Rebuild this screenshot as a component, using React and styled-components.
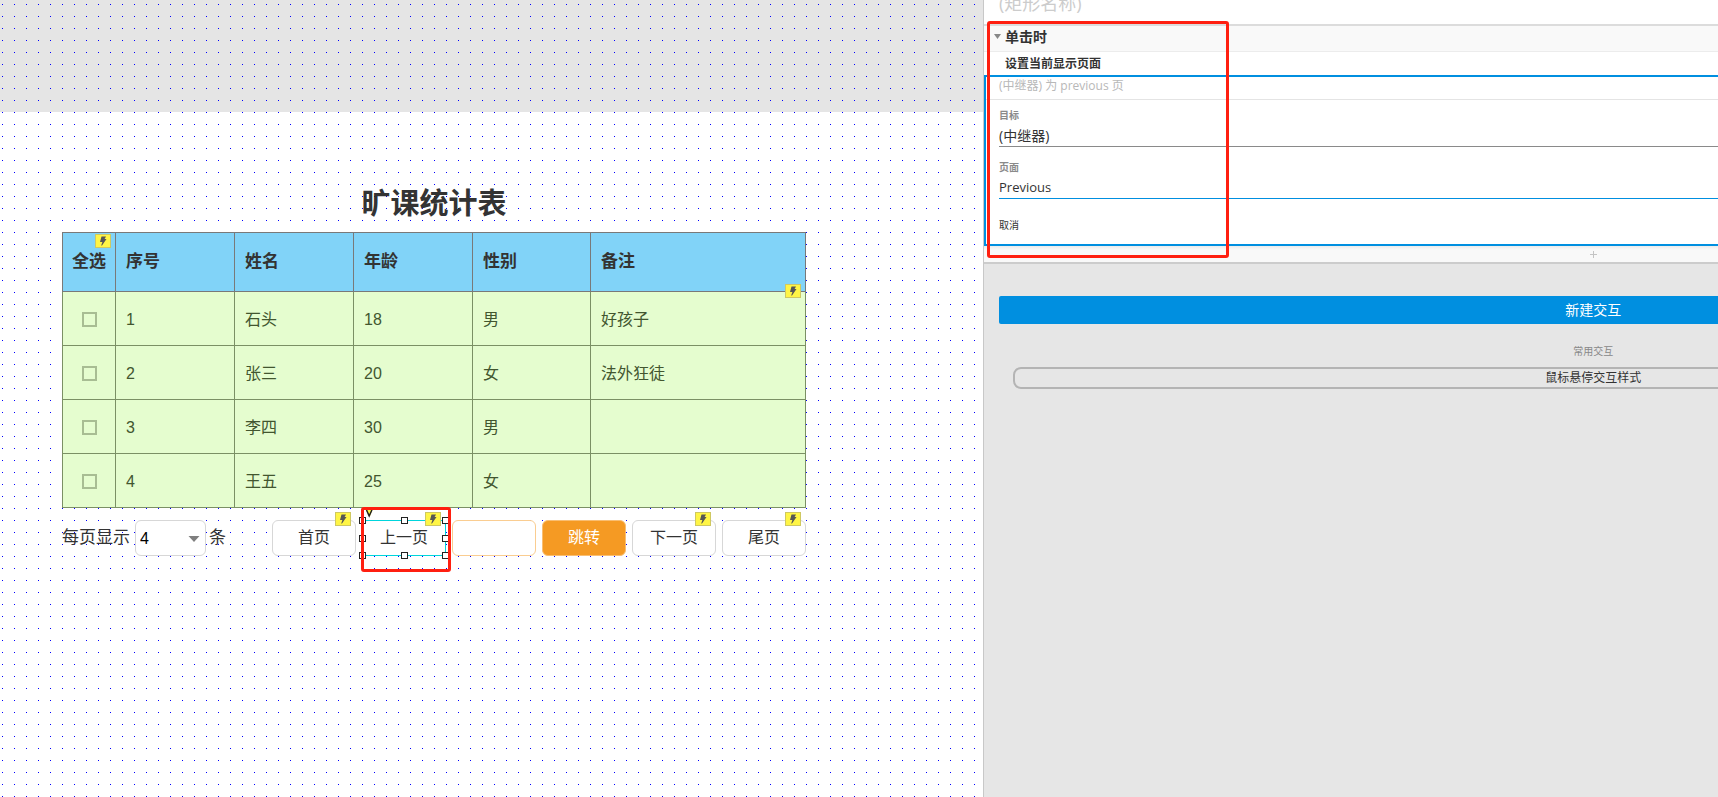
import React from 'react'
import styled, { createGlobalStyle } from 'styled-components'

const GlobalStyle = createGlobalStyle`
  * {
    box-sizing: border-box;
  }
  body {
    margin: 0;
    overflow: hidden;
    color: #333;
    font-family: 'Liberation Sans', 'Noto Sans CJK SC', sans-serif;
  }
  button, input, select {
    margin: 0;
    font-family: inherit;
  }
`

const Workspace = styled.div`
  display: grid;
  grid-template-columns: minmax(0, 983fr) minmax(0, 735fr);
  min-height: 100vh;
`

/* ---------- canvas ---------- */

const Canvas = styled.main`
  padding: 184px 0 0 62px;
  overflow: hidden;
  background-color: #fff;
  background-image:
    conic-gradient(from 270deg at 1px 1px, #0000ff 90deg, transparent 0),
    linear-gradient(#e5e5e5, #e5e5e5);
  background-size: 12px 12px, 100% 112px;
  background-position: 2px 4px, 0 0;
  background-repeat: repeat, no-repeat;
`

const Sheet = styled.div`
  width: 744px;
`

const Title = styled.h1`
  margin: 0 0 8px;
  font-size: 29px;
  line-height: 40px;
  text-align: center;
`

const Table = styled.table`
  width: 743px;
  border-collapse: collapse;
  table-layout: fixed;
`

const HeadCell = styled.th`
  position: relative;
  height: 59px;
  padding: 0 ${({ $tick }) => ($tick ? '0' : '10px')};
  border: 1px solid #797979;
  background: #81d3f8;
  font-size: 17px;
  line-height: 24px;
  text-align: ${({ $tick }) => ($tick ? 'center' : 'left')};
`

const Cell = styled.td`
  position: relative;
  height: 54px;
  padding: 2px ${({ $tick }) => ($tick ? '0' : '10px')} 0;
  border: 1px solid #7b9065;
  background: #e5fdcf;
  color: #42562f;
  font-size: 16px;
  line-height: 24px;
  text-align: ${({ $tick }) => ($tick ? 'center' : 'left')};
`

const Tick = styled.input`
  appearance: none;
  display: block;
  width: 15px;
  height: 15px;
  margin: 0 auto;
  border: 2px solid #a8bd93;
`

const BadgeBox = styled.span`
  position: absolute;
  top: ${({ $top }) => $top};
  right: 4px;
  display: flex;
  align-items: center;
  justify-content: center;
  width: 16px;
  height: 14px;
  border: 1px solid #cfc862;
  background: #fff545;
`

const Badge = ({ top = '-9px' }) => (
  <BadgeBox $top={top}>
    <svg width="8" height="10" viewBox="0 0 8 10" aria-hidden="true">
      <path d="M2.5 0.5H7L5.6 3h1.9L3 9.5H2.2L3.4 6H1z" fill="#555" />
    </svg>
  </BadgeBox>
)

const Footer = styled.div`
  display: flex;
  align-items: center;
  justify-content: space-between;
  margin-top: 12px;
`

const PageSize = styled.label`
  display: flex;
  align-items: center;
  font-size: 17px;
  line-height: 24px;
`

const SelectWrap = styled.span`
  position: relative;
  margin: 0 3px 0 5px;
`

const Select = styled.select`
  appearance: none;
  display: block;
  width: 71px;
  height: 36px;
  padding: 0 4px;
  border: 1px solid #d7d7d7;
  border-radius: 6px;
  background: #fff;
  color: #000;
  font-size: 16px;
`

const Caret = styled.svg`
  position: absolute;
  top: 16px;
  right: 6px;
  pointer-events: none;
`

const Pager = styled.div`
  display: flex;
  gap: 6px;
`

const PageButton = styled.button`
  position: relative;
  width: 84px;
  height: 36px;
  padding: 0;
  border: 1px solid ${({ $primary }) => ($primary ? '#f9be72' : '#d7d7d7')};
  border-radius: 6px;
  background: ${({ $primary }) => ($primary ? '#f59a23' : '#fff')};
  color: ${({ $primary }) => ($primary ? '#fff' : '#333')};
  font-size: 16px;
  line-height: 24px;
`

const PageInput = styled.input`
  width: 84px;
  height: 36px;
  padding: 0 8px;
  border: 1px solid #facd91;
  border-radius: 6px;
  font-size: 16px;
`

const Selected = styled.div`
  position: relative;
`

const Frame = styled.svg`
  position: absolute;
  top: -13px;
  left: -3px;
  pointer-events: none;
`

const Highlight = styled.div`
  position: absolute;
  top: ${({ $top }) => $top};
  left: ${({ $left }) => $left};
  width: ${({ $width }) => $width};
  height: ${({ $height }) => $height};
  border: 3px solid #ff1f10;
  border-radius: 3px;
  pointer-events: none;
`

/* ---------- inspector ---------- */

const Inspector = styled.aside`
  position: relative;
  overflow: hidden;
  border-left: 1px solid #c8c8c8;
  background: #e6e6e6;
  font-family: 'Open Sans', 'Noto Sans CJK SC', sans-serif;
`

/* the panel runs on past the right edge of the window */
const Panel = styled.div`
  width: 166%;
`

const NameInput = styled.input`
  display: block;
  width: 100%;
  height: 24px;
  padding: 0 15px 18px;
  border: 0;
  background: #fff;
  font-size: 18px;
  line-height: 24px;
  &::placeholder {
    color: #ccc;
  }
`

const EventHeader = styled.div`
  display: flex;
  align-items: center;
  gap: 4px;
  height: 28px;
  padding: 0 0 4px 10px;
  border-top: 2px solid #dcdcdc;
  border-bottom: 1px solid #ececec;
  background: #f9f9f9;
  font-size: 14px;
  font-weight: bold;
  line-height: 20px;
`

const ActionName = styled.div`
  padding: 2px 21px 1px;
  background: #fff;
  font-size: 12px;
  font-weight: bold;
  line-height: 20px;
`

const Action = styled.div`
  border: 2px solid #008fe0;
  background: #fff;
`

const Summary = styled.div`
  margin-bottom: 7px;
  padding: 0 13px 4px;
  border-bottom: 1px solid #e4e4e4;
  color: #b8b8b8;
  font-size: 12px;
  line-height: 18px;
`

const Field = styled.label`
  display: block;
  margin: 0 13px;
  color: #8a8a8a;
  font-size: 10px;
  font-weight: bold;
  line-height: 16px;
  & + & {
    margin-top: 12px;
  }
`

const FieldInput = styled.input`
  display: block;
  width: 100%;
  height: 24px;
  padding: 0;
  border: 0;
  border-bottom: 1px solid ${({ $active }) => ($active ? '#008fe0' : '#8a8a8a')};
  color: #333;
  font-size: ${({ $active }) => ($active ? '13px' : '14px')};
  line-height: 20px;
  outline: 0;
`

const Cancel = styled.button`
  display: block;
  margin: 18px 13px 11px;
  padding: 0;
  border: 0;
  background: none;
  color: #333;
  font-size: 10px;
  line-height: 16px;
`

const AddRow = styled.button`
  display: flex;
  align-items: center;
  justify-content: center;
  width: 100%;
  height: 18px;
  padding: 0;
  border: 0;
  border-bottom: 2px solid #ccc;
  background: linear-gradient(#ececec, #f9f9f9 4px);
`

const Actions = styled.div`
  display: flex;
  flex-direction: column;
  padding: 32px 15px;
`

const NewButton = styled.button`
  height: 28px;
  border: 0;
  border-radius: 2px;
  background: #008fe0;
  color: #fff;
  font-size: 14px;
  line-height: 20px;
`

const CommonLabel = styled.div`
  margin: 19px 0 8px;
  color: #888;
  font-size: 10px;
  line-height: 16px;
  text-align: center;
`

const OutlineButton = styled.button`
  height: 22px;
  margin: 0 14px;
  padding: 0;
  border: 2px solid #b4b4b4;
  border-radius: 8px;
  background: transparent;
  color: #333;
  font-size: 12px;
  line-height: 18px;
`

const rows = [
  { id: 1, name: '石头', age: 18, sex: '男', note: '好孩子' },
  { id: 2, name: '张三', age: 20, sex: '女', note: '法外狂徒' },
  { id: 3, name: '李四', age: 30, sex: '男', note: '' },
  { id: 4, name: '王五', age: 25, sex: '女', note: '' },
]

const handles = [
  [0, 10], [42, 10], [83, 10],
  [0, 28], [83, 28],
  [0, 45], [42, 45], [83, 45],
]

const StudentTable = () => (
  <Table>
    <colgroup>
      <col width="53" />
      <col width="119" />
      <col width="119" />
      <col width="119" />
      <col width="118" />
      <col width="215" />
    </colgroup>
    <thead>
      <tr>
        <HeadCell $tick>
          全选
          <Badge top="1px" />
        </HeadCell>
        <HeadCell>序号</HeadCell>
        <HeadCell>姓名</HeadCell>
        <HeadCell>年龄</HeadCell>
        <HeadCell>性别</HeadCell>
        <HeadCell>备注</HeadCell>
      </tr>
    </thead>
    <tbody>
      {rows.map((row, i) => (
        <tr key={row.id}>
          <Cell $tick>
            <Tick type="checkbox" aria-label={row.name} />
          </Cell>
          <Cell>{row.id}</Cell>
          <Cell>{row.name}</Cell>
          <Cell>{row.age}</Cell>
          <Cell>{row.sex}</Cell>
          <Cell>
            {row.note}
            {i === 0 && <Badge top="-8px" />}
          </Cell>
        </tr>
      ))}
    </tbody>
  </Table>
)

const SelectionFrame = () => (
  <Frame width="90" height="52" viewBox="0 0 90 52" aria-hidden="true">
    <path d="M3 13.5h63M82 13.5h4.5v35H3" fill="none" stroke="#00d5dc" />
    <path d="M7 3h6.5L11 9H9.500z" fill="#fff545" />
    <path d="M7.500 3l2.700 6 2.700-6" fill="none" stroke="#222" strokeWidth="1.5" />
    {handles.map(([x, y]) => (
      <rect key={`${x}-${y}`} x={x + 0.5} y={y + 0.5} width="6" height="6" fill="#fff" stroke="#222" />
    ))}
  </Frame>
)

const App = () => (
  <Workspace>
    <GlobalStyle />
    <Canvas>
      <Sheet>
        <Title>旷课统计表</Title>
        <StudentTable />
        <Footer>
          <PageSize>
            每页显示
            <SelectWrap>
              <Select defaultValue="4">
                <option>4</option>
                <option>8</option>
              </Select>
              <Caret width="12" height="6" viewBox="0 0 12 6">
                <path d="M0.5 0h11L6 6z" fill="#7f7f7f" />
              </Caret>
            </SelectWrap>
            条
          </PageSize>
          <Pager>
            <PageButton>首页<Badge /></PageButton>
            <Selected>
              <PageButton>上一页<Badge /></PageButton>
              <SelectionFrame />
              <Highlight $top="-13px" $left="-1px" $width="90px" $height="65px" />
            </Selected>
            <PageInput aria-label="页码" />
            <PageButton $primary>跳转</PageButton>
            <PageButton>下一页<Badge /></PageButton>
            <PageButton>尾页<Badge /></PageButton>
          </Pager>
        </Footer>
      </Sheet>
    </Canvas>
    <Inspector>
      <Panel>
        <NameInput placeholder="(矩形名称)" aria-label="名称" />
        <EventHeader>
          <svg width="7" height="5" viewBox="0 0 7 5" aria-hidden="true">
            <path d="M0 0h7L3.5 5z" fill="#888" />
          </svg>
          单击时
        </EventHeader>
        <ActionName>设置当前显示页面</ActionName>
        <Action>
          <Summary>(中继器) 为 previous 页</Summary>
          <Field>
            目标
            <FieldInput defaultValue="(中继器)" />
          </Field>
          <Field>
            页面
            <FieldInput $active defaultValue="Previous" />
          </Field>
          <Cancel>取消</Cancel>
        </Action>
        <AddRow aria-label="添加">
          <svg width="7" height="7" viewBox="0 0 7 7">
            <path d="M3.5 0v7M0 3.5h7" stroke="#c4c4c4" />
          </svg>
        </AddRow>
        <Actions>
          <NewButton>新建交互</NewButton>
          <CommonLabel>常用交互</CommonLabel>
          <OutlineButton>鼠标悬停交互样式</OutlineButton>
        </Actions>
      </Panel>
      <Highlight $top="21px" $left="3px" $width="242px" $height="237px" />
    </Inspector>
  </Workspace>
)

export default App
